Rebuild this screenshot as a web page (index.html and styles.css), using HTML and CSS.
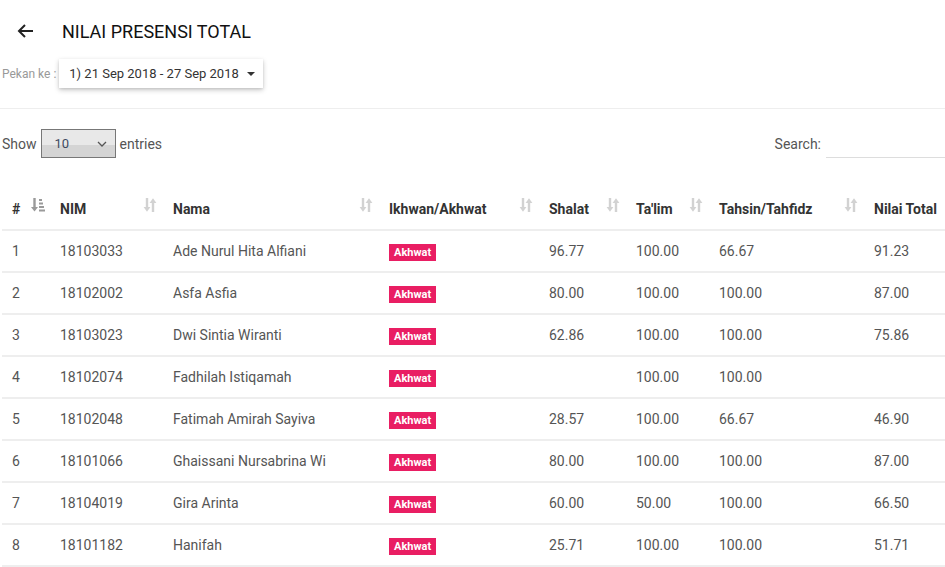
FILE: index.html
```html
<!DOCTYPE html>
<html>
<head>
<meta charset="utf-8">
<title>Nilai Presensi Total</title>
<link rel="stylesheet" href="styles.css">
</head>
<body>
<div class="page">
  <div class="header">
    <svg class="back" width="16" height="14" viewBox="0 0 16 14"><path d="M16 7H2.5M8 1L2 7l6 6" fill="none" stroke="#222" stroke-width="2"/></svg>
    <h1 class="title">NILAI PRESENSI TOTAL</h1>
  </div>
  <div class="pekan">
    <span class="pekan-label">Pekan ke :</span>
    <button class="dropdown">1) 21 Sep 2018 - 27 Sep 2018 <span class="caret"></span></button>
  </div>
  <div class="divider"></div>
  <div class="controls">
    <label class="length">Show
      <span class="select-wrap">
        <select class="select"><option>10</option></select>
        <svg class="chev" width="10" height="6" viewBox="0 0 10 6"><path d="M1 1l4 4 4-4" fill="none" stroke="#555" stroke-width="1.3"/></svg>
      </span>
      entries</label>
    <label class="search">Search: <input class="search-input" type="text"></label>
  </div>
  <table class="table">
    <colgroup>
      <col style="width:48px"><col style="width:113px"><col style="width:216px"><col style="width:160px"><col style="width:87px"><col style="width:83px"><col style="width:155px"><col>
    </colgroup>
    <thead>
      <tr>
        <th>#<svg class="sort asc" width="14" height="14" viewBox="0 0 14 14"><path d="M3.5 0v11" stroke="#9a9a9a" stroke-width="2.4"/><path d="M0 9h7l-3.5 4.5z" fill="#9a9a9a"/><rect x="8" y="1" width="3" height="2" fill="#9a9a9a"/><rect x="8" y="4.5" width="4" height="2" fill="#9a9a9a"/><rect x="8" y="8" width="5" height="2" fill="#9a9a9a"/><rect x="8" y="11.5" width="6" height="2" fill="#9a9a9a"/></svg></th>
        <th>NIM<svg class="sort" width="14" height="14" viewBox="0 0 14 14"><path d="M4 0v10" stroke="#d2d2d2" stroke-width="2.4"/><path d="M0.6 9h6.8l-3.4 4.8z" fill="#d2d2d2"/><path d="M10 14v-10" stroke="#d2d2d2" stroke-width="2.4"/><path d="M6.6 5h6.8l-3.4-4.8z" fill="#d2d2d2"/></svg></th>
        <th>Nama<svg class="sort" width="14" height="14" viewBox="0 0 14 14"><path d="M4 0v10" stroke="#d2d2d2" stroke-width="2.4"/><path d="M0.6 9h6.8l-3.4 4.8z" fill="#d2d2d2"/><path d="M10 14v-10" stroke="#d2d2d2" stroke-width="2.4"/><path d="M6.6 5h6.8l-3.4-4.8z" fill="#d2d2d2"/></svg></th>
        <th>Ikhwan/Akhwat<svg class="sort" width="14" height="14" viewBox="0 0 14 14"><path d="M4 0v10" stroke="#d2d2d2" stroke-width="2.4"/><path d="M0.6 9h6.8l-3.4 4.8z" fill="#d2d2d2"/><path d="M10 14v-10" stroke="#d2d2d2" stroke-width="2.4"/><path d="M6.6 5h6.8l-3.4-4.8z" fill="#d2d2d2"/></svg></th>
        <th>Shalat<svg class="sort" width="14" height="14" viewBox="0 0 14 14"><path d="M4 0v10" stroke="#d2d2d2" stroke-width="2.4"/><path d="M0.6 9h6.8l-3.4 4.8z" fill="#d2d2d2"/><path d="M10 14v-10" stroke="#d2d2d2" stroke-width="2.4"/><path d="M6.6 5h6.8l-3.4-4.8z" fill="#d2d2d2"/></svg></th>
        <th>Ta'lim<svg class="sort" width="14" height="14" viewBox="0 0 14 14"><path d="M4 0v10" stroke="#d2d2d2" stroke-width="2.4"/><path d="M0.6 9h6.8l-3.4 4.8z" fill="#d2d2d2"/><path d="M10 14v-10" stroke="#d2d2d2" stroke-width="2.4"/><path d="M6.6 5h6.8l-3.4-4.8z" fill="#d2d2d2"/></svg></th>
        <th>Tahsin/Tahfidz<svg class="sort" width="14" height="14" viewBox="0 0 14 14"><path d="M4 0v10" stroke="#d2d2d2" stroke-width="2.4"/><path d="M0.6 9h6.8l-3.4 4.8z" fill="#d2d2d2"/><path d="M10 14v-10" stroke="#d2d2d2" stroke-width="2.4"/><path d="M6.6 5h6.8l-3.4-4.8z" fill="#d2d2d2"/></svg></th>
        <th>Nilai Total</th>
      </tr>
    </thead>
    <tbody>
      <tr><td>1</td><td>18103033</td><td>Ade Nurul Hita Alfiani</td><td><span class="badge">Akhwat</span></td><td>96.77</td><td>100.00</td><td>66.67</td><td>91.23</td></tr>
      <tr><td>2</td><td>18102002</td><td>Asfa Asfia</td><td><span class="badge">Akhwat</span></td><td>80.00</td><td>100.00</td><td>100.00</td><td>87.00</td></tr>
      <tr><td>3</td><td>18103023</td><td>Dwi Sintia Wiranti</td><td><span class="badge">Akhwat</span></td><td>62.86</td><td>100.00</td><td>100.00</td><td>75.86</td></tr>
      <tr><td>4</td><td>18102074</td><td>Fadhilah Istiqamah</td><td><span class="badge">Akhwat</span></td><td></td><td>100.00</td><td>100.00</td><td></td></tr>
      <tr><td>5</td><td>18102048</td><td>Fatimah Amirah Sayiva</td><td><span class="badge">Akhwat</span></td><td>28.57</td><td>100.00</td><td>66.67</td><td>46.90</td></tr>
      <tr><td>6</td><td>18101066</td><td>Ghaissani Nursabrina Wi</td><td><span class="badge">Akhwat</span></td><td>80.00</td><td>100.00</td><td>100.00</td><td>87.00</td></tr>
      <tr><td>7</td><td>18104019</td><td>Gira Arinta</td><td><span class="badge">Akhwat</span></td><td>60.00</td><td>50.00</td><td>100.00</td><td>66.50</td></tr>
      <tr><td>8</td><td>18101182</td><td>Hanifah</td><td><span class="badge">Akhwat</span></td><td>25.71</td><td>100.00</td><td>100.00</td><td>51.71</td></tr>
    </tbody>
  </table>
</div>
</body>
</html>
```
FILE: styles.css
```css
html, body {
  margin: 0;
  padding: 0;
  overflow: hidden;
  background: #fff;
}
body {
  font-family: Roboto, "Liberation Sans", sans-serif;
  color: #555;
  font-size: 14px;
}
.page {
  width: 945px;
}
.header {
  display: flex;
  align-items: center;
  height: 59px;
  padding-left: 17px;
  box-sizing: border-box;
}
.back {
  display: block;
  margin-top: 3px;
}
.title {
  margin: 3px 0 0 29px;
  font-size: 18px;
  font-weight: 400;
  color: #111;
}
.pekan {
  display: flex;
  align-items: center;
  height: 29px;
  padding-left: 2px;
}
.pekan-label {
  font-size: 12px;
  color: #999;
}
.dropdown {
  margin-left: 3px;
  height: 29px;
  width: 204px;
  padding: 0 0 0 10px;
  border: none;
  background: #fff;
  box-shadow: 0 2px 5px rgba(0,0,0,0.22), 0 1px 2px rgba(0,0,0,0.08);
  font-family: Roboto, "Liberation Sans", sans-serif;
  font-size: 13px;
  color: #333;
  text-align: left;
  display: flex;
  align-items: center;
}
.caret {
  display: inline-block;
  width: 0;
  height: 0;
  margin-left: 8px;
  border-left: 4px solid transparent;
  border-right: 4px solid transparent;
  border-top: 4px solid #333;
}
.divider {
  height: 1px;
  background: #eee;
  margin-top: 20px;
}
.controls {
  display: flex;
  justify-content: space-between;
  align-items: center;
  padding-top: 20px;
  padding-left: 2px;
  height: 29px;
}
.length {
  display: flex;
  align-items: center;
  gap: 4px;
  color: #555;
}
.select-wrap {
  position: relative;
  display: inline-block;
}
.select {
  appearance: none;
  -webkit-appearance: none;
  width: 75px;
  height: 29px;
  border: 1px solid #777;
  border-radius: 0;
  background: linear-gradient(#e8e8e8 0, #e8e8e8 55%, #d4d4d4 55%, #d4d4d4 100%);
  font-family: Roboto, "Liberation Sans", sans-serif;
  font-size: 13px;
  color: #3e4a61;
  padding: 0 0 0 13px;
  display: block;
}
.chev {
  position: absolute;
  right: 9px;
  top: 12px;
}
.search {
  display: flex;
  align-items: center;
  gap: 5px;
  color: #555;
}
.search-input {
  width: 119px;
  height: 29px;
  border: none;
  border-bottom: 1px solid #ddd;
  box-sizing: border-box;
  outline: none;
  padding: 0;
}
.table {
  margin-top: 29px;
  margin-left: 2px;
  width: 943px;
  border-collapse: collapse;
  table-layout: fixed;
}
.table th {
  position: relative;
  text-align: left;
  font-weight: 700;
  color: #333;
  padding: 12px 10px 10px;
  line-height: 20px;
  border-bottom: 2px solid #eee;
  white-space: nowrap;
}
.table td {
  padding: 10px 10px;
  line-height: 20px;
  border-bottom: 2px solid #eee;
  color: #555;
  white-space: nowrap;
  overflow: hidden;
}
.sort {
  position: absolute;
  right: 6px;
  top: 11px;
}
.sort.asc {
  right: 5px;
}
.badge {
  display: inline-block;
  background: #e91e63;
  color: #fff;
  font-size: 11px;
  font-weight: 700;
  line-height: 13px;
  padding: 2px 5px;
  vertical-align: middle;
}
```
